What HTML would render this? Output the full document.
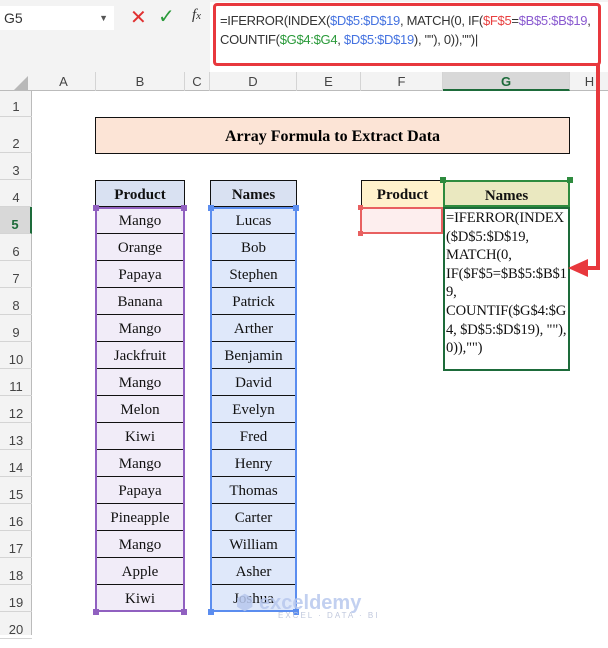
<!DOCTYPE html><html><head><style>
*{margin:0;padding:0;box-sizing:border-box}
body{width:608px;height:635px;overflow:hidden;background:#fff;position:relative;font-family:"Liberation Sans",sans-serif}
.a{position:absolute}
.ch{position:absolute;top:72px;height:19px;font-size:13px;color:#444;text-align:center;line-height:19px;border-right:1px solid #d4d4d4}
.rh{position:absolute;left:0;width:32px;font-size:13px;color:#444;text-align:center;border-bottom:1px solid #d4d4d4}
.c{position:absolute;height:27px;font-family:"Liberation Serif",serif;font-size:15px;text-align:center;line-height:28px;color:#111}
</style></head><body>
<div class="a" style="left:0;top:0;width:608px;height:72px;background:#f3f3f3"></div>
<div class="a" style="left:0;top:6px;width:114px;height:24px;background:#fff;font-size:14px;line-height:24px;padding-left:4px;color:#333">G5<span style="position:absolute;right:6px;font-size:9px;color:#555">&#9660;</span></div>
<div class="a" style="left:130px;top:5px;font-size:20px;color:#e03030">&#10005;</div>
<div class="a" style="left:158px;top:4px;font-size:20px;color:#2a9a3a">&#10003;</div>
<div class="a" style="left:192px;top:7px;font-family:'Liberation Serif',serif;font-style:italic;font-size:15px;color:#333">f<span style="font-size:11px">x</span></div>
<div class="a" style="left:210px;top:2px;width:398px;height:70px;background:#fff"></div>
<div class="a" style="left:213px;top:3px;width:388px;height:63px;border:3px solid #e8383d;border-radius:4px;padding:5px 0 0 4px;font-size:13px;line-height:19px;color:#333;letter-spacing:-0.3px;white-space:nowrap">=IFERROR(INDEX(<span style="color:#4472e0">$D$5:$D$19</span>, MATCH(0, IF(<span style="color:#e84040">$F$5</span>=<span style="color:#8a5ad0">$B$5:$B$19</span>,<br>COUNTIF(<span style="color:#2a9a3a">$G$4:$G4</span>, <span style="color:#4472e0">$D$5:$D$19</span>), ""), 0)),"")|</div>
<div class="a" style="left:0;top:72px;width:608px;height:19px;background:#f3f3f3;border-bottom:1px solid #bbb"></div>
<div class="a" style="left:14px;top:76px;width:0;height:0;border-left:14px solid transparent;border-bottom:14px solid #b8b8b8"></div>
<div class="ch" style="left:32px;width:64px">A</div>
<div class="ch" style="left:96px;width:89px">B</div>
<div class="ch" style="left:185px;width:25px">C</div>
<div class="ch" style="left:210px;width:87px">D</div>
<div class="ch" style="left:297px;width:64px">E</div>
<div class="ch" style="left:361px;width:82px">F</div>
<div class="ch" style="left:443px;width:127px;background:#d8d8d8;color:#1d6b3a;font-weight:bold;border-bottom:2px solid #1d6b3a">G</div>
<div class="ch" style="left:570px;width:40px">H</div>
<div class="a" style="left:0;top:91px;width:32px;height:544px;background:#f3f3f3;border-right:1px solid #bbb"></div>
<div class="rh" style="top:91px;height:26px;line-height:32px">1</div>
<div class="rh" style="top:117px;height:36px;line-height:54px">2</div>
<div class="rh" style="top:153px;height:27px;line-height:36px">3</div>
<div class="rh" style="top:180px;height:27px;line-height:36px">4</div>
<div class="rh" style="top:207px;height:27px;line-height:36px;background:#d8d8d8;color:#1d6b3a;font-weight:bold;border-right:2px solid #1d6b3a">5</div>
<div class="rh" style="top:234px;height:27px;line-height:36px">6</div>
<div class="rh" style="top:261px;height:27px;line-height:36px">7</div>
<div class="rh" style="top:288px;height:27px;line-height:36px">8</div>
<div class="rh" style="top:315px;height:27px;line-height:36px">9</div>
<div class="rh" style="top:342px;height:27px;line-height:36px">10</div>
<div class="rh" style="top:369px;height:27px;line-height:36px">11</div>
<div class="rh" style="top:396px;height:27px;line-height:36px">12</div>
<div class="rh" style="top:423px;height:27px;line-height:36px">13</div>
<div class="rh" style="top:450px;height:27px;line-height:36px">14</div>
<div class="rh" style="top:477px;height:27px;line-height:36px">15</div>
<div class="rh" style="top:504px;height:27px;line-height:36px">16</div>
<div class="rh" style="top:531px;height:27px;line-height:36px">17</div>
<div class="rh" style="top:558px;height:27px;line-height:36px">18</div>
<div class="rh" style="top:585px;height:27px;line-height:36px">19</div>
<div class="rh" style="top:612px;height:27px;line-height:36px">20</div>

<div class="a" style="left:95px;top:117px;width:475px;height:37px;background:#fce4d6;border:1.5px solid #111;font-family:'Liberation Serif',serif;font-weight:bold;font-size:16px;text-align:center;line-height:37px">Array Formula to Extract Data</div>

<div class="c" style="left:95px;top:180px;width:90px;background:#d9e1f2;border:1.5px solid #111;font-weight:bold">Product</div>
<div class="c" style="left:210px;top:180px;width:87px;background:#d9e1f2;border:1.5px solid #111;font-weight:bold">Names</div>
<div class="a" style="left:95px;top:207px;width:90px;height:405px;background:#f1ecf8;border:2px solid #9060c0"></div>
<div class="a" style="left:210px;top:207px;width:87px;height:405px;background:#dfe8fa;border:2px solid #5b8def"></div>
<div id="tb"></div>
<script>
var p=["Mango","Orange","Papaya","Banana","Mango","Jackfruit","Mango","Melon","Kiwi","Mango","Papaya","Pineapple","Mango","Apple","Kiwi"];
var n=["Lucas","Bob","Stephen","Patrick","Arther","Benjamin","David","Evelyn","Fred","Henry","Thomas","Carter","William","Asher","Joshua"];
var h="";
for(var i=0;i<15;i++){var t=207+i*27;var b=i<14?"border-bottom:1px solid #111;":"";
h+='<div class="c" style="left:97px;top:'+t+'px;width:86px;'+b+'">'+p[i]+'</div>';
h+='<div class="c" style="left:212px;top:'+t+'px;width:83px;'+b+'">'+n[i]+'</div>';}
document.getElementById("tb").innerHTML=h;
</script>
<div class="a" style="left:93px;top:205px;width:6px;height:6px;background:#9060c0"></div>
<div class="a" style="left:181px;top:205px;width:6px;height:6px;background:#9060c0"></div>
<div class="a" style="left:93px;top:609px;width:6px;height:6px;background:#9060c0"></div>
<div class="a" style="left:181px;top:609px;width:6px;height:6px;background:#9060c0"></div>
<div class="a" style="left:208px;top:205px;width:6px;height:6px;background:#5b8def"></div>
<div class="a" style="left:293px;top:205px;width:6px;height:6px;background:#5b8def"></div>
<div class="a" style="left:208px;top:609px;width:6px;height:6px;background:#5b8def"></div>
<div class="a" style="left:293px;top:609px;width:6px;height:6px;background:#5b8def"></div>

<div class="c" style="left:361px;top:180px;width:82px;background:#fff2cc;border-top:1.5px solid #111;border-left:1.5px solid #111;font-weight:bold">Product</div>
<div class="c" style="left:443px;top:180px;width:127px;background:#eae8c0;border:2px solid #2e8b3e;font-weight:bold">Names</div>
<div class="a" style="left:360px;top:207px;width:83px;height:27px;background:#fdeeee;border:2px solid #e86060"></div>
<div class="a" style="left:443px;top:207px;width:127px;height:164px;border:2px solid #1d6b3a;font-family:'Liberation Serif',serif;font-size:14.6px;line-height:18.6px;padding:0 0 0 1px;white-space:nowrap;letter-spacing:-0.15px;color:#111;overflow:hidden">=IFERROR(INDEX<br>($D$5:$D$19,<br>MATCH(0,<br>IF($F$5=$B$5:$B$1<br>9,<br>COUNTIF($G$4:$G<br>4, $D$5:$D$19), ""),<br>0)),"")</div>
<div class="a" style="left:440px;top:177px;width:6px;height:6px;background:#2e8b3e"></div>
<div class="a" style="left:567px;top:177px;width:6px;height:6px;background:#2e8b3e"></div>
<div class="a" style="left:358px;top:205px;width:5px;height:5px;background:#e86060"></div>
<div class="a" style="left:358px;top:231px;width:5px;height:5px;background:#e86060"></div>

<div class="a" style="left:596px;top:64px;width:4px;height:206px;background:#e8383d"></div>
<div class="a" style="left:585px;top:266px;width:15px;height:4px;background:#e8383d"></div>
<div class="a" style="left:568px;top:259px;width:0;height:0;border-top:9px solid transparent;border-bottom:9px solid transparent;border-right:20px solid #e8383d"></div>

<div class="a" style="left:236px;top:590px;font-size:20px;font-weight:bold;color:#b8c8ee;opacity:.85">&#11042; exceldemy</div>
<div class="a" style="left:278px;top:611px;font-size:8px;letter-spacing:2px;color:#c0c8dd">EXCEL · DATA · BI</div>
</body></html>
